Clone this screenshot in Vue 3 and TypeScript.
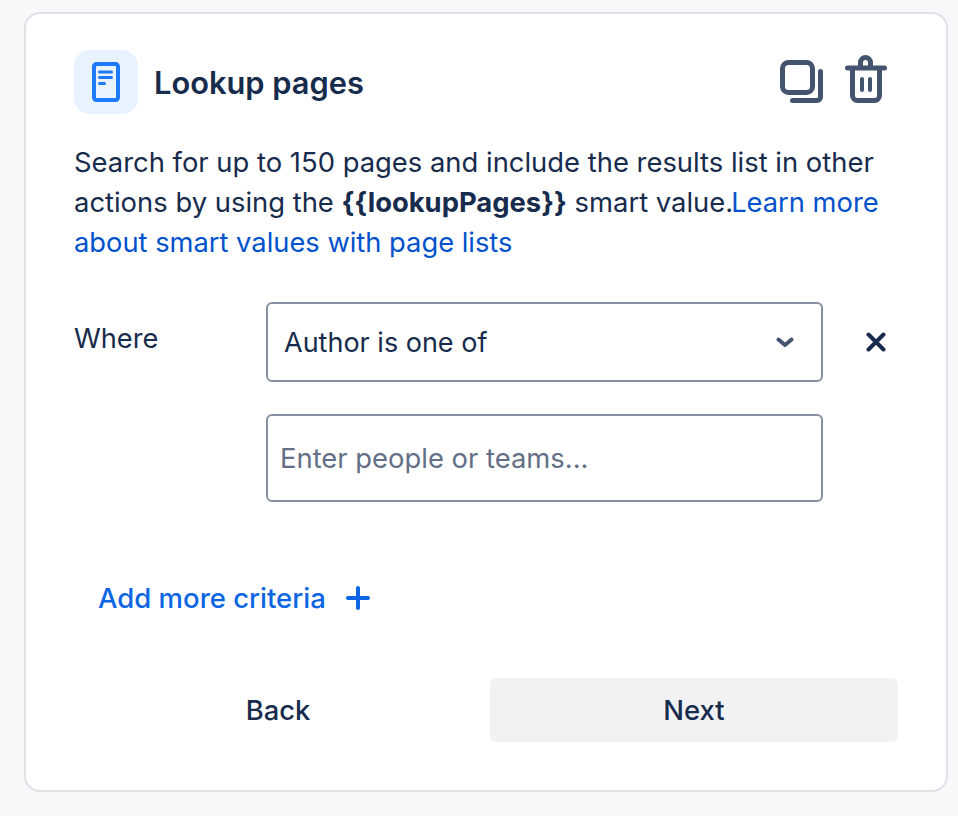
<template>
  <div class="page">
    <div class="card">
      <header class="head">
        <div class="head-icon">
          <svg width="28" height="40" viewBox="0 0 28 40" fill="none" stroke="#1d7afc">
            <rect x="2" y="2" width="24" height="36" rx="2.500" stroke-width="4" />
            <path d="M7.500 10h12M7.500 15.500h12M7.500 21.500h5" stroke-width="3" stroke-linecap="round" />
          </svg>
        </div>
        <h1 class="title">Lookup pages</h1>
        <div class="head-actions">
          <svg width="44" height="44" viewBox="0 0 44 44" fill="none" stroke="#44546f" stroke-width="5" stroke-linecap="round" stroke-linejoin="round">
            <rect x="2.500" y="2.500" width="30" height="30" rx="6" />
            <path d="M40.500 11.500v25.500a3.500 3.500 0 0 1-3.500 3.500H12.500" />
          </svg>
          <svg width="44" height="50" viewBox="0 0 44 50" fill="none" stroke="#44546f" stroke-width="5" stroke-linecap="round" stroke-linejoin="round">
            <path d="M3.500 14h37" />
            <path d="M16.500 13V8.500a5 5 0 0 1 10 0V13" />
            <path d="M8.500 15v26.500a5 5 0 0 0 5 5h17a5 5 0 0 0 5-5V15" />
            <path d="M18 25v11M26 25v11" stroke-width="4" />
          </svg>
        </div>
      </header>

      <p class="desc">
        Search for up to 150 pages and include the results list in other actions by using the
        <strong v-pre>{{lookupPages}}</strong> smart value.<a class="link" href="#">Learn more about smart values with page lists</a>
      </p>

      <div class="form">
        <label class="where">Where</label>
        <div class="select">
          <span>Author is one of</span>
          <svg width="18" height="11" viewBox="0 0 18 11" fill="none" stroke="#44546f" stroke-width="4" stroke-linecap="round" stroke-linejoin="round">
            <path d="M2.500 2.500l6.500 5.500 6.500-5.500" />
          </svg>
        </div>
        <button class="remove" type="button" aria-label="Remove">
          <svg width="20" height="20" viewBox="0 0 20 20" fill="none" stroke="#172b4d" stroke-width="4" stroke-linecap="round">
            <path d="M2.500 2.500l15 15M17.500 2.500l-15 15" />
          </svg>
        </button>
        <input class="people" type="text" placeholder="Enter people or teams..." />
      </div>

      <button class="add" type="button">
        Add more criteria
        <svg width="26" height="26" viewBox="0 0 26 26" fill="none" stroke="#0c66e4" stroke-width="4" stroke-linecap="round">
          <path d="M13 3v20M3 13h20" />
        </svg>
      </button>

      <footer class="foot">
        <button class="btn back" type="button">Back</button>
        <button class="btn next" type="button">Next</button>
      </footer>
    </div>
  </div>
</template>

<script setup lang="ts">
</script>

<style>
body {
  background: #f7f8f9;
}
</style>

<style scoped>
.page {
  height: 816px;
  box-sizing: border-box;
  padding: 12px 10px 24px 24px;
  background: #f7f8f9;
  font-family: Inter, "Liberation Sans", sans-serif;
  color: #172b4d;
  overflow: hidden;
}

.card {
  box-sizing: border-box;
  height: 780px;
  padding: 36px 48px 0;
  background: #ffffff;
  border: 2px solid #dfe1e6;
  border-radius: 16px;
}

.head {
  display: flex;
  align-items: center;
  height: 64px;
}

.head-icon {
  width: 64px;
  height: 64px;
  display: flex;
  align-items: center;
  justify-content: center;
  background: #e9f2ff;
  border-radius: 16px;
}

.title {
  margin: 2px 0 0 16px;
  font-size: 30.800px;
  font-weight: 600;
  line-height: 40px;
}

.head-actions {
  margin: 0 10px 6px auto;
  display: flex;
  align-items: flex-end;
  gap: 20px;
  height: 50px;
}

.desc {
  margin: 28px 0 0;
  font-size: 27.400px;
  line-height: 40px;
}

.desc strong {
  font-weight: 700;
}

.link {
  margin-left: -2px;
  font-size: 27.300px;
  line-height: 1;
  color: #0052cc;
  text-decoration: none;
}

.form {
  margin-top: 40px;
  display: grid;
  grid-template-columns: 192px 557px 1fr;
  row-gap: 32px;
}

.where {
  font-size: 27.200px;
  line-height: 40px;
  padding-top: 17px;
}

.select {
  box-sizing: border-box;
  height: 80px;
  padding: 0 27px 0 16px;
  display: flex;
  align-items: center;
  justify-content: space-between;
  border: 2px solid #8590a2;
  border-radius: 6px;
  font-size: 27px;
}

.remove {
  padding: 0;
  margin-left: 43px;
  width: 22px;
  border: none;
  background: none;
  display: flex;
  align-items: center;
}

.people {
  grid-column: 2;
  box-sizing: border-box;
  height: 88px;
  padding: 0 12px;
  border: 2px solid #8590a2;
  border-radius: 6px;
  outline: none;
  font-family: inherit;
  font-size: 27.400px;
  color: #172b4d;
}

.people::placeholder {
  color: #626f86;
  opacity: 1;
}

.add {
  margin: 76px 0 0 24px;
  padding: 0;
  display: flex;
  align-items: center;
  gap: 19px;
  border: none;
  background: none;
  font-family: inherit;
  font-size: 27.500px;
  font-weight: 500;
  line-height: 40px;
  color: #0c66e4;
}

.foot {
  margin-top: 60px;
  display: grid;
  grid-template-columns: 1fr 408px;
  gap: 8px;
}

.btn {
  height: 64px;
  border: none;
  border-radius: 6px;
  background: none;
  font-family: inherit;
  font-size: 27.400px;
  font-weight: 500;
  color: #172b4d;
}

.next {
  background: #f1f2f4;
}
</style>
